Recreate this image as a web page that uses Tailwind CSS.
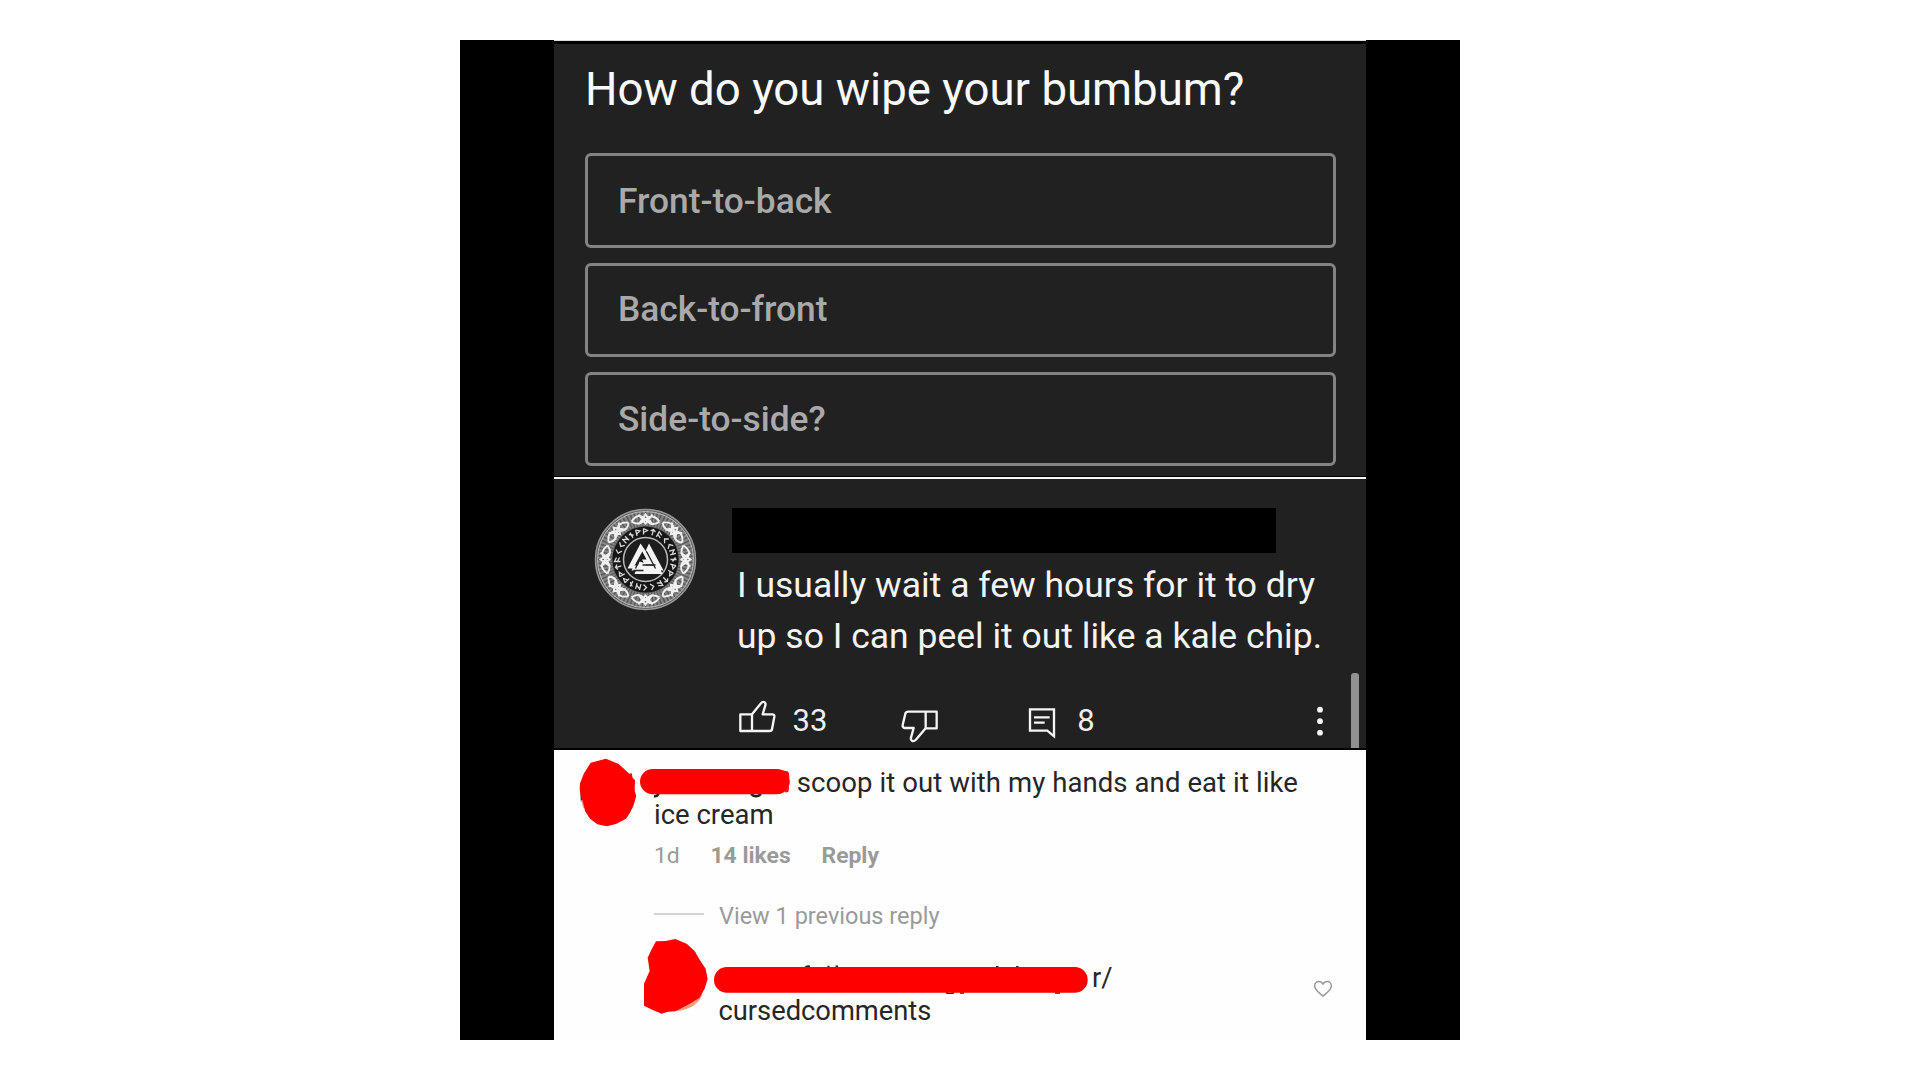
<!DOCTYPE html>
<html lang="en">
<head>
<meta charset="utf-8">
<title>Poll and comments</title>
<script src="https://cdn.jsdelivr.net/npm/@tailwindcss/browser@4"></script>
</head>
<body class="bg-white font-['Roboto',sans-serif] h-[1080px] overflow-hidden flex justify-center items-center">
<main class="w-[1000px] h-[1000px] bg-black flex justify-center">
  <div class="w-[812px] h-full flex flex-col">

    <!-- Poll -->
    <section class="h-[437px] bg-[#212121] border-t border-[#dcdcdc] flex flex-col">
      <div class="h-[3px] bg-black shrink-0"></div>
      <h1 class="mt-[16px] ml-[31px] h-[60px] leading-[60px] text-[45.6px] text-[#fafafa] whitespace-nowrap">How do you wipe your bumbum?</h1>
      <div class="mt-[33.4px] ml-[31px] w-[751px] flex flex-col gap-[15px] text-[35.3px] font-medium text-[#a9a9a9]">
        <div class="h-[94.3px] border-[3px] border-[#838383] rounded-[6px] pl-[30px] pt-px flex items-center">Front-to-back</div>
        <div class="h-[94.3px] border-[3px] border-[#838383] rounded-[6px] pl-[30px] flex items-center">Back-to-front</div>
        <div class="h-[94.3px] border-[3px] border-[#838383] rounded-[6px] pl-[30px] flex items-center">Side-to-side?</div>
      </div>
      <div class="mt-auto h-px bg-black shrink-0"></div>
    </section>

    <!-- Top comment -->
    <section class="relative h-[273px] bg-[#212121] border-t-2 border-t-[#f5f5f5] border-b-2 border-b-black flex">
      <svg class="ml-[39.500px] mt-[28.500px] w-[103px] h-[103px] shrink-0" viewBox="-51.5 -51.5 103 103" fill="none">
        <circle r="50.5" fill="#5a5a5a"/>
        <circle r="50" stroke="#9a9a9a" stroke-width="1.4"/>
        <circle r="41" stroke="#858585" stroke-width="15" stroke-dasharray="2 1.4"/>
        <circle r="48" stroke="#bdbdbd" stroke-width="1"/>
        <g id="knots" stroke="#f0f0f0" stroke-width="1.9"></g>
        <circle r="33" fill="#161616"/>
        <g id="runes" stroke="#d8d8d8" stroke-width="1.3"></g>
        <circle r="22" fill="#1d1d1d" stroke="#b9b9b9" stroke-width="1.5"/>
        <g fill="#f4f4f4">
          <path d="M-5 -16L-18 9H-12.5L-3.2 -8L1 0L-3.5 0L-1 5H9.5Z"/>
          <path d="M3.5 -16L18 11H-14L-11.5 6H8.5L0.5 -9.5Z"/>
          <path d="M-6 2L-11 14.5H17L14.5 9H-1L1 4Z"/>
        </g>
        <path d="M-4 -4L-10 9M-3 5.500H10M1 -8L10 9M-12 11H-2" stroke="#252525" stroke-width="1.3"/>
      </svg>
      <div class="ml-[35.500px] flex-1 flex flex-col">
        <div class="mt-[29px] w-[543.500px] h-[45px] bg-black shrink-0"></div>
        <p class="mt-[7px] ml-[5px] text-[35.500px] leading-[51px] text-[#f4f4f4] whitespace-nowrap">I usually wait a few hours for it to dry<br>up so I can peel it out like a kale chip.</p>
        <div class="mt-[38px] h-[45px] flex items-start text-[31px] leading-[42px] text-[#efefef]">
          <svg class="ml-[6px] w-[38px] h-[45px] shrink-0" viewBox="24 30 114 135" fill="none" stroke="#f5f5f5" stroke-width="7" stroke-linejoin="round">
            <path d="M31 73H66V123H31ZM66 73L93 40Q98 33 104 37Q108 40 106 46L98 73H127Q134 73 133 80L126 118Q125 123 119 123H66"/>
          </svg>
          <span class="ml-[16.500px] w-[35px]">33</span>
          <svg class="ml-[72.500px] w-[38px] h-[45px] shrink-0" viewBox="510 30 114 135" fill="none" stroke="#f5f5f5" stroke-width="7" stroke-linejoin="round">
            <path d="M620 65V115H587V65ZM587 65H535Q528 65 526 71L518 105Q517 112 523 114H551L543 143Q541 150 547 153Q553 154 557 150L587 115"/>
          </svg>
          <svg class="ml-[88.700px] w-[30px] h-[45px] shrink-0" viewBox="890 30 90 135" fill="none" stroke="#f5f5f5" stroke-width="7">
            <path d="M899 58H971V139L951 122H899ZM911 82H958M911 98H943"/>
          </svg>
          <span class="ml-[20.600px] w-[18px]">8</span>
          <svg class="ml-auto mr-[38.800px] w-[14px] h-[45px] shrink-0" viewBox="0 0 14 45" fill="#f5f5f5">
            <circle cx="7" cy="9.700" r="2.900"/><circle cx="7" cy="21.200" r="2.900"/><circle cx="7" cy="32.700" r="2.900"/>
          </svg>
        </div>
      </div>
      <div class="absolute right-[7px] bottom-0 w-[8px] h-[75px] rounded-t-[3px] bg-[#919191]"></div>
    </section>

    <!-- Replies -->
    <section class="h-[290px] bg-[#fefefe] flex flex-col text-[27.500px] leading-[32px] text-[#262626] whitespace-nowrap">
      <div class="flex items-start">
        <svg class="ml-[24.600px] mt-[7.800px] w-[57.700px] h-[69.300px] shrink-0" viewBox="85 52 173 208">
          <path d="M89 150L90 180L96 185L97 160Z" fill="#3a3340"/>
          <path d="M91 178L100 178L104 200L98 203Z" fill="#d8a0b8"/>
          <path d="M120 66L166 54L204 70L236 99L243 98L246 112L253 118L252 150L257 166L248 196L238 216L226 234L196 250L168 257L140 251L118 234L103 211L97 185L89 160L87 146L88 128L100 98Z" fill="#fe0000"/>
        </svg>
        <div class="ml-[17.700px] mt-[17px]">
          <div class="flex h-[32px]">
            <svg class="-ml-[14.300px] mt-[1.700px] w-[150px] h-[29px] shrink-0" viewBox="0 0 150 29" fill="none">
              <path d="M18.500 24.500Q17.500 27.500 14 27.200M111 25Q116 29.500 121 25" stroke="#222" stroke-width="2.400"/>
              <rect width="149.800" height="25.200" rx="12.600" fill="#fe0000"/>
              <path d="M143 2L148 3L149 8M145 23L148 22.500L148.500 18" fill="#fe0000" stroke="#fe0000"/>
            </svg>
            <span class="ml-[7px] tracking-[0.090px]">scoop it out with my hands and eat it like</span>
          </div>
          <div>ice cream</div>
          <div class="mt-[10px] flex text-[22.900px] leading-[30px] text-[#9a9a9a]">
            <span class="w-[56.500px]">1d</span>
            <span class="w-[111px] font-bold">14 likes</span>
            <span class="font-bold">Reply</span>
          </div>
          <div class="mt-[30px] flex items-center gap-[14.500px] text-[23.500px] leading-[30px] text-[#9a9a9a]">
            <span class="w-[50.500px] h-[2px] -mt-[4px] bg-[#d3d3d3]"></span>
            <span>View 1 previous reply</span>
          </div>
        </div>
      </div>
      <div class="flex items-start">
        <svg class="ml-[88.600px] mt-[6.700px] w-[65.300px] h-[76.700px] shrink-0" viewBox="277 173 196 230">
          <path d="M380 392Q440 385 456 340L440 350L385 380Z" fill="#f3a078"/>
          <path d="M316 183L345 182L374 176L408 190L432 212L448 240L465 265L471 296L462 325L447 352L420 369L375 393L352 394L333 400L306 389L280 376V310L297 272L291 232L303 207Z" fill="#fe0000"/>
        </svg>
        <div class="ml-[10.600px] mt-[31px] leading-[32.500px] text-[27.300px]">
          <div class="flex h-[32.500px]">
            <svg class="-ml-[4.700px] mt-[3.200px] w-[374px] h-[29px] shrink-0" viewBox="0 -2 374 29" fill="none">
              <path d="M91 .8Q92.500 -1.500 96 -.6M113.500 -.5H115.500M121.500 -.8H124M282 -.3H284.500M302 -.3H304.500M232 25.500Q236 27.500 240 25.500M246 26H250M341 26H346" stroke="#222" stroke-width="1.600"/>
              <rect width="373.700" height="25.800" rx="12.900" fill="#fe0000"/>
            </svg>
            <span class="ml-[4.300px]">r/</span>
          </div>
          <div>cursedcomments</div>
        </div>
        <svg class="ml-auto mr-[33px] mt-[49px] w-[20px] h-[18px] shrink-0" viewBox="0 0 20 18" fill="none" stroke="#999" stroke-width="1.500" stroke-linejoin="round">
          <path d="M10 16.200C7.500 13.800 1.600 10.300 1.600 5.800C1.600 3.200 3.500 1.500 5.700 1.500C7.600 1.500 9.200 2.600 10 4.300C10.800 2.600 12.400 1.500 14.300 1.500C16.500 1.500 18.400 3.200 18.400 5.800C18.400 10.300 12.500 13.800 10 16.200Z"/>
        </svg>
      </div>
    </section>
  </div>
</main>
<script>
  // Ring ornaments of the avatar: eight knots and a circle of runes.
  const NS = 'http://www.w3.org/2000/svg';
  function add(id, d, angle) {
    const p = document.createElementNS(NS, 'path');
    p.setAttribute('d', d);
    p.setAttribute('transform', 'rotate(' + angle + ')');
    document.getElementById(id).appendChild(p);
  }
  for (let i = 0; i < 8; i++) {
    add('knots', 'M-14 -38Q-7 -48 0 -40T14 -38M-14 -38Q-7 -33 0 -40T14 -38M-7 -45L0 -36L7 -45M-7 -35L0 -45L7 -35', i * 45);
  }
  const runes = ['M-2 -31V-25M-2 -31L2 -29L-2 -27', 'M0 -31V-25M-2 -30L2 -27', 'M-2 -31V-25M2 -31V-25M-2 -30L2 -27', 'M2 -31L-1 -28L2 -25', 'M-2 -25V-31L2 -29M-2 -28L2 -26', 'M0 -25V-31M-2.5 -29L0 -31L2.5 -29'];
  for (let i = 0; i < 24; i++) add('runes', runes[(i * 5 + (i >> 2)) % 6], i * 15);
</script>
</body>
</html>
